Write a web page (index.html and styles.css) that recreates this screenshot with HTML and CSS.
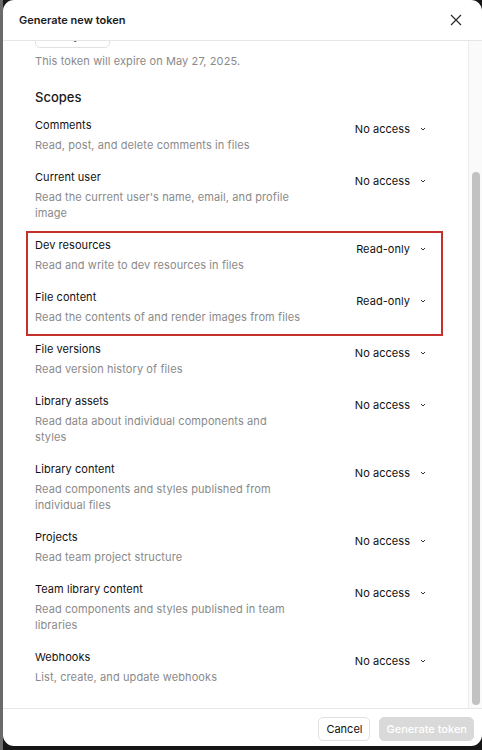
FILE: index.html
```html
<!DOCTYPE html>
<html lang="en">
<head>
<meta charset="utf-8">
<title>Generate new token</title>
<link rel="stylesheet" href="styles.css">
</head>
<body>
<div class="backdrop">
  <div class="modal">
    <header class="modal-header">
      <h1 class="modal-title">Generate new token</h1>
      <button class="close" aria-label="Close">
        <svg width="12" height="12" viewBox="0 0 12 12"><path d="M1 1 L11 11 M11 1 L1 11" stroke="#2b2b2b" stroke-width="1.2" fill="none"/></svg>
      </button>
    </header>
    <div class="modal-body">
      <div class="scroll">
        <div class="content">
          <button class="expiry">30 days
            <svg class="chev" width="8" height="8" viewBox="0 0 8 8"><path d="M2 3 L4 5 L6 3" stroke="#333" stroke-width="1" fill="none"/></svg>
          </button>
          <p class="hint">This token will expire on May 27, 2025.</p>
          <h2 class="section-title">Scopes</h2>
          <div class="scopes">
            <div class="scope">
              <div class="scope-text"><div class="scope-name">Comments</div><div class="scope-desc">Read, post, and delete comments in files</div></div>
              <button class="select">No access<svg class="chev" width="8" height="8" viewBox="0 0 8 8"><path d="M2 3 L4 5 L6 3" stroke="#333" stroke-width="1" fill="none"/></svg></button>
            </div>
            <div class="scope">
              <div class="scope-text"><div class="scope-name">Current user</div><div class="scope-desc">Read the current user's name, email, and profile image</div></div>
              <button class="select">No access<svg class="chev" width="8" height="8" viewBox="0 0 8 8"><path d="M2 3 L4 5 L6 3" stroke="#333" stroke-width="1" fill="none"/></svg></button>
            </div>
            <div class="highlight">
              <div class="scope">
                <div class="scope-text"><div class="scope-name">Dev resources</div><div class="scope-desc">Read and write to dev resources in files</div></div>
                <button class="select">Read-only<svg class="chev" width="8" height="8" viewBox="0 0 8 8"><path d="M2 3 L4 5 L6 3" stroke="#333" stroke-width="1" fill="none"/></svg></button>
              </div>
              <div class="scope">
                <div class="scope-text"><div class="scope-name">File content</div><div class="scope-desc">Read the contents of and render images from files</div></div>
                <button class="select">Read-only<svg class="chev" width="8" height="8" viewBox="0 0 8 8"><path d="M2 3 L4 5 L6 3" stroke="#333" stroke-width="1" fill="none"/></svg></button>
              </div>
            </div>
            <div class="scope">
              <div class="scope-text"><div class="scope-name">File versions</div><div class="scope-desc">Read version history of files</div></div>
              <button class="select">No access<svg class="chev" width="8" height="8" viewBox="0 0 8 8"><path d="M2 3 L4 5 L6 3" stroke="#333" stroke-width="1" fill="none"/></svg></button>
            </div>
            <div class="scope">
              <div class="scope-text"><div class="scope-name">Library assets</div><div class="scope-desc">Read data about individual components and<br>styles</div></div>
              <button class="select">No access<svg class="chev" width="8" height="8" viewBox="0 0 8 8"><path d="M2 3 L4 5 L6 3" stroke="#333" stroke-width="1" fill="none"/></svg></button>
            </div>
            <div class="scope">
              <div class="scope-text"><div class="scope-name">Library content</div><div class="scope-desc">Read components and styles published from individual files</div></div>
              <button class="select">No access<svg class="chev" width="8" height="8" viewBox="0 0 8 8"><path d="M2 3 L4 5 L6 3" stroke="#333" stroke-width="1" fill="none"/></svg></button>
            </div>
            <div class="scope">
              <div class="scope-text"><div class="scope-name">Projects</div><div class="scope-desc">Read team project structure</div></div>
              <button class="select">No access<svg class="chev" width="8" height="8" viewBox="0 0 8 8"><path d="M2 3 L4 5 L6 3" stroke="#333" stroke-width="1" fill="none"/></svg></button>
            </div>
            <div class="scope">
              <div class="scope-text"><div class="scope-name">Team library content</div><div class="scope-desc">Read components and styles published in team libraries</div></div>
              <button class="select">No access<svg class="chev" width="8" height="8" viewBox="0 0 8 8"><path d="M2 3 L4 5 L6 3" stroke="#333" stroke-width="1" fill="none"/></svg></button>
            </div>
            <div class="scope">
              <div class="scope-text"><div class="scope-name">Webhooks</div><div class="scope-desc">List, create, and update webhooks</div></div>
              <button class="select">No access<svg class="chev" width="8" height="8" viewBox="0 0 8 8"><path d="M2 3 L4 5 L6 3" stroke="#333" stroke-width="1" fill="none"/></svg></button>
            </div>
          </div>
        </div>
      </div>
      <div class="scrollbar"><div class="thumb"></div></div>
    </div>
    <footer class="modal-footer">
      <button class="btn btn-secondary">Cancel</button>
      <button class="btn btn-primary" disabled>Generate token</button>
    </footer>
  </div>
</div>
</body>
</html>
```

FILE: styles.css
```css
* { box-sizing: border-box; }
html, body { margin: 0; padding: 0; }
body {
  background: #1b1b1b;
  font-family: Inter, "Noto Sans", "Liberation Sans", sans-serif;
  color: #1a1a1a;
}
.backdrop {
  height: 750px;
  width: 482px;
  border-left: 3px solid #6a6a6a;
  background: #161616;
  overflow: hidden;
}
.modal {
  width: 479px;
  height: 746px;
  background: #fff;
  border-radius: 11px;
  display: flex;
  flex-direction: column;
  overflow: hidden;
}
.modal-header {
  height: 41px;
  flex: none;
  display: flex;
  align-items: center;
  justify-content: space-between;
  padding: 0 14px 0 16px;
  border-bottom: 1px solid #e6e6e6;
}
.modal-title {
  margin: 0;
  font-size: 11px;
  font-weight: 600;
  line-height: 16px;
  color: #1a1a1a;
}
.close {
  border: 0;
  background: none;
  padding: 0;
  width: 24px;
  height: 24px;
  display: flex;
  align-items: center;
  justify-content: center;
}
.modal-body {
  flex: 1;
  display: flex;
  min-height: 0;
}
.scroll {
  flex: 1;
  overflow: hidden;
}
.content {
  margin-top: -21px;
  padding: 0 34px 0 32px;
}
.expiry {
  height: 28px;
  width: 75px;
  border: 1px solid #e2e2e2;
  border-radius: 5px;
  background: #fff;
  font: inherit;
  font-size: 11px;
  white-space: nowrap;
  color: #1a1a1a;
  display: flex;
  align-items: center;
  gap: 6px;
  padding: 3px 8px 0;
}
.hint {
  margin: 5px 0 0;
  font-size: 11px;
  line-height: 16px;
  letter-spacing: 0.1px;
  color: #8a8a8a;
}
.section-title {
  margin: 18px 0 0;
  font-size: 13px;
  font-weight: 500;
  line-height: 20px;
  color: #1a1a1a;
}
.scopes {
  margin-top: 10px;
  display: flex;
  flex-direction: column;
  gap: 16px;
}
.highlight {
  display: flex;
  flex-direction: column;
  gap: 16px;
  margin: -6px -9px -11px -9px;
  padding: 4px 7px 9px 7px;
  border: 2px solid #c4302b;
}
.scope {
  display: flex;
  justify-content: space-between;
  align-items: flex-start;
}
.scope-text {
  max-width: 272px;
}
.scope-name {
  font-size: 11px;
  line-height: 16px;
  font-weight: 400;
  letter-spacing: 0.05px;
  color: #111;
}
.scope-desc {
  margin-top: 4px;
  font-size: 11px;
  line-height: 16px;
  letter-spacing: 0.1px;
  color: #8a8a8a;
}
.select {
  margin-top: -2px;
  height: 28px;
  display: flex;
  align-items: center;
  gap: 9px;
  padding: 0 7px 0 8px;
  border: 0;
  background: none;
  font: inherit;
  font-size: 11px;
  font-weight: 400;
  letter-spacing: 0.05px;
  color: #111;
}
.chev { flex: none; }
.scrollbar {
  width: 14px;
  flex: none;
  border-left: 1px solid #ececec;
  background: #fafafa;
  padding: 131px 2px 0 3px;
}
.thumb {
  width: 8px;
  height: 533px;
  border-radius: 4px;
  background: #c2c2c2;
}
.modal-footer {
  flex: none;
  height: 38px;
  border-top: 1px solid #e6e6e6;
  display: flex;
  justify-content: flex-end;
  align-items: flex-start;
  gap: 9px;
  padding: 8px 8px 0;
}
.btn {
  height: 24px;
  border-radius: 5px;
  font: inherit;
  font-size: 11px;
  font-weight: 400;
  line-height: 16px;
  padding: 0 7px;
}
.btn-secondary {
  background: #fff;
  border: 1px solid #e0e0e0;
  color: #111;
}
.btn-primary {
  background: #d9d9d9;
  border: 1px solid #d9d9d9;
  color: #fff;
  font-weight: 500;
  padding: 0 6px;
}
```
